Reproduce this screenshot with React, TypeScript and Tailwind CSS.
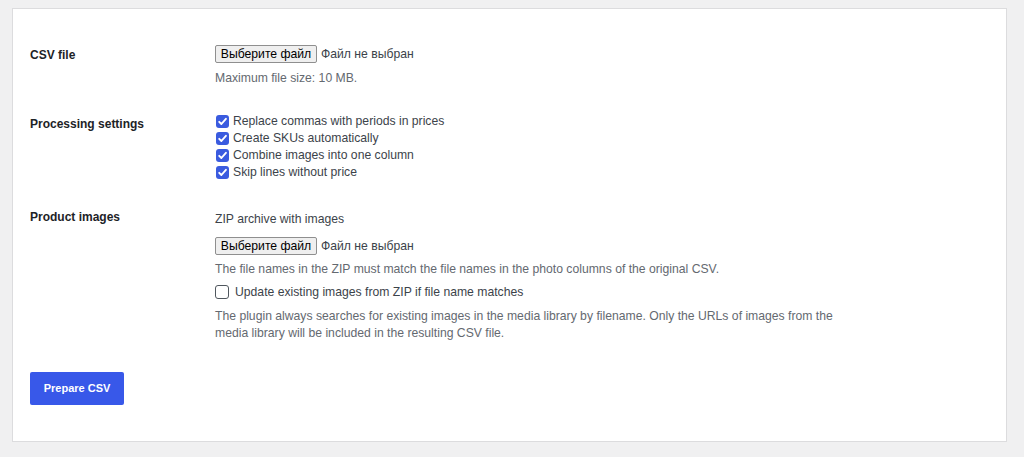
import React from "react";

const font = { fontFamily: '"Liberation Sans", Arial, sans-serif' };

function FileInput() {
  return (
    <div className="flex items-center h-[18px]">
      <span className="inline-flex items-center justify-center h-[18px] w-[102px] bg-[#efefef] border border-[#8f8f8f] rounded-[2px] text-[12.2px] text-black leading-none">
        Выберите файл
      </span>
      <span className="ml-[4px] text-[12.2px] text-[#3c434a] leading-none">Файл не выбран</span>
    </div>
  );
}

function Checked({ label }: { label: string }) {
  return (
    <div className="flex items-center h-[17px]">
      <span className="w-[13px] h-[13px] ml-[1px] rounded-[3px] bg-[#3a5bdf] flex items-center justify-center">
        <svg width="11" height="11" viewBox="0 0 11 11">
          <path d="M2.2 5.8 L4.4 8 L8.9 2.8" fill="none" stroke="white" strokeWidth="1.9" strokeLinecap="round" strokeLinejoin="round" />
        </svg>
      </span>
      <span className="ml-[4px] text-[12.2px] text-[#3c434a] leading-none">{label}</span>
    </div>
  );
}

export default function App() {
  return (
    <div className="w-[1024px] h-[457px] bg-[#f0f0f1] pt-[8px] pl-[12px] pr-[17px]" style={font}>
      <div className="bg-white border border-[#dcdcde] h-[434px] pt-[36px] pl-[17px]">
        {/* Row 1 */}
        <div className="flex">
          <div className="w-[185px] text-[12px] font-bold text-[#1d2327] leading-[18px] pt-[1px]">CSV file</div>
          <div>
            <FileInput />
            <div className="mt-[7px] text-[12.2px] text-[#646970] leading-[17px]">Maximum file size: 10 MB.</div>
          </div>
        </div>
        {/* Row 2 */}
        <div className="flex mt-[26px]">
          <div className="w-[185px] text-[12px] font-bold text-[#1d2327] leading-[17px] pt-[3px]">Processing settings</div>
          <div>
            <Checked label="Replace commas with periods in prices" />
            <Checked label="Create SKUs automatically" />
            <Checked label="Combine images into one column" />
            <Checked label="Skip lines without price" />
          </div>
        </div>
        {/* Row 3 */}
        <div className="flex mt-[28px]">
          <div className="w-[185px] text-[12px] font-bold text-[#1d2327] leading-[17px]">Product images</div>
          <div className="pt-[2px]">
            <div className="text-[12.2px] text-[#3c434a] leading-[17px]">ZIP archive with images</div>
            <div className="mt-[9px]">
              <FileInput />
            </div>
            <div className="mt-[6px] text-[12.2px] text-[#646970] leading-[17px]">
              The file names in the ZIP must match the file names in the photo columns of the original CSV.
            </div>
            <div className="mt-[6px] flex items-center h-[16px]">
              <span className="w-[14px] h-[14px] rounded-[3px] border border-[#50575e] bg-white" />
              <span className="ml-[6px] text-[12.2px] text-[#3c434a] leading-none">Update existing images from ZIP if file name matches</span>
            </div>
            <div className="mt-[8px] max-w-[640px] text-[12.2px] text-[#646970] leading-[17px]">
              The plugin always searches for existing images in the media library by filename. Only the URLs of images from the media library will be included in the resulting CSV file.
            </div>
          </div>
        </div>
        <div className="mt-[30px]">
          <button className="w-[94px] h-[33px] bg-[#3858e9] rounded-[2px] text-white text-[11px] font-bold">
            Prepare CSV
          </button>
        </div>
      </div>
    </div>
  );
}
